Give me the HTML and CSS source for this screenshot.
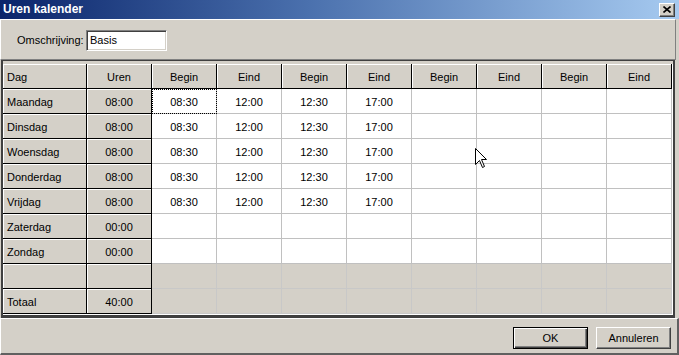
FILE: index.html
```html
<!DOCTYPE html>
<html>
<head>
<meta charset="utf-8">
<link rel="stylesheet" href="styles.css">
</head>
<body>
<div class="window">
  <div class="titlebar">
    <span class="title">Uren kalender</span>
    <div class="close">
      <svg width="8" height="7" viewBox="0 0 8 7"><path d="M0.5 0.5 L7.5 6.5 M7.5 0.5 L0.5 6.5" stroke="#000" stroke-width="1.6" fill="none"/></svg>
    </div>
  </div>
  <div class="toppanel">
    <span class="label">Omschrijving:</span>
    <div class="input">Basis</div>
  </div>
  <div class="gridwrap">
    <div class="gridinner">
      <div class="grid">
        <div class="c fx left">Dag</div><div class="c fx">Uren</div>
        <div class="c fx">Begin</div><div class="c fx">Eind</div><div class="c fx">Begin</div><div class="c fx">Eind</div>
        <div class="c fx">Begin</div><div class="c fx">Eind</div><div class="c fx">Begin</div><div class="c fx">Eind</div>

        <div class="c fx left">Maandag</div><div class="c fx">08:00</div>
        <div class="c d focus">08:30</div><div class="c d">12:00</div><div class="c d">12:30</div><div class="c d">17:00</div>
        <div class="c d"></div><div class="c d"></div><div class="c d"></div><div class="c d"></div>

        <div class="c fx left">Dinsdag</div><div class="c fx">08:00</div>
        <div class="c d">08:30</div><div class="c d">12:00</div><div class="c d">12:30</div><div class="c d">17:00</div>
        <div class="c d"></div><div class="c d"></div><div class="c d"></div><div class="c d"></div>

        <div class="c fx left">Woensdag</div><div class="c fx">08:00</div>
        <div class="c d">08:30</div><div class="c d">12:00</div><div class="c d">12:30</div><div class="c d">17:00</div>
        <div class="c d"></div><div class="c d"></div><div class="c d"></div><div class="c d"></div>

        <div class="c fx left">Donderdag</div><div class="c fx">08:00</div>
        <div class="c d">08:30</div><div class="c d">12:00</div><div class="c d">12:30</div><div class="c d">17:00</div>
        <div class="c d"></div><div class="c d"></div><div class="c d"></div><div class="c d"></div>

        <div class="c fx left">Vrijdag</div><div class="c fx">08:00</div>
        <div class="c d">08:30</div><div class="c d">12:00</div><div class="c d">12:30</div><div class="c d">17:00</div>
        <div class="c d"></div><div class="c d"></div><div class="c d"></div><div class="c d"></div>

        <div class="c fx left">Zaterdag</div><div class="c fx">00:00</div>
        <div class="c d"></div><div class="c d"></div><div class="c d"></div><div class="c d"></div>
        <div class="c d"></div><div class="c d"></div><div class="c d"></div><div class="c d"></div>

        <div class="c fx left">Zondag</div><div class="c fx">00:00</div>
        <div class="c d"></div><div class="c d"></div><div class="c d"></div><div class="c d"></div>
        <div class="c d"></div><div class="c d"></div><div class="c d"></div><div class="c d"></div>

        <div class="c fx left"></div><div class="c fx"></div>
        <div class="c g"></div><div class="c g"></div><div class="c g"></div><div class="c g"></div>
        <div class="c g"></div><div class="c g"></div><div class="c g"></div><div class="c g"></div>

        <div class="c fx left">Totaal</div><div class="c fx">40:00</div>
        <div class="c g last"></div><div class="c g last"></div><div class="c g last"></div><div class="c g last"></div>
        <div class="c g last"></div><div class="c g last"></div><div class="c g last"></div><div class="c g last"></div>
      </div>
    </div>
  </div>
  <div class="bottompanel">
    <div class="btn default"><span>OK</span></div>
    <div class="btn"><span>Annuleren</span></div>
  </div>
  <svg class="cursor" width="13" height="21" viewBox="0 0 13 21">
    <path d="M0.5 0.5 L0.5 16.5 L4.5 12.5 L7.5 19.5 L9.5 18.5 L6.5 11.5 L11.5 11.5 Z" fill="#fff" stroke="#000" stroke-width="1"/>
  </svg>
</div>
</body>
</html>
```

FILE: styles.css
```css
* { box-sizing: border-box; }
html, body { margin: 0; padding: 0; }
body {
  width: 679px;
  height: 355px;
  overflow: hidden;
  background: #d4d0c8;
  font-family: "Liberation Sans", Arial, sans-serif;
  font-size: 11px;
  color: #000;
}
.window {
  position: relative;
  width: 679px;
  height: 355px;
  background: #d4d0c8;
}
.titlebar {
  height: 19px;
  background: linear-gradient(to right, #0a246a 0%, #4a70ad 45%, #a6caf0 100%);
  display: flex;
  align-items: center;
  padding-left: 3px;
  padding-right: 4px;
}
.title {
  flex: 1;
  color: #fff;
  font-weight: bold;
  font-size: 12px;
  line-height: 19px;
}
.close {
  width: 16px;
  height: 14px;
  background: #d4d0c8;
  border-top: 1px solid #fff;
  border-left: 1px solid #fff;
  border-right: 1px solid #404040;
  border-bottom: 1px solid #404040;
  box-shadow: inset -1px -1px 0 #808080;
  display: flex;
  align-items: center;
  justify-content: center;
  padding-bottom: 1px;
}
.close svg { display: block; }
.toppanel {
  width: 676px;
  height: 41px;
  border-top: 1px solid #fff;
  border-left: 1px solid #fff;
  border-right: 1px solid #808080;
  border-bottom: 1px solid #808080;
  display: flex;
  align-items: flex-start;
  padding-top: 10px;
  padding-left: 16px;
}
.label {
  width: 69px;
  line-height: 21px;
}
.input {
  width: 81px;
  height: 21px;
  background: #fff;
  border-top: 1px solid #808080;
  border-left: 1px solid #808080;
  border-right: 1px solid #fff;
  border-bottom: 1px solid #fff;
  box-shadow: inset 1px 1px 0 #404040, inset -1px -1px 0 #d4d0c8;
  padding-left: 3px;
  line-height: 19px;
}
.gridwrap {
  margin-left: 1px;
  width: 674px;
  height: 258px;
  border-top: 1px solid #404040;
  border-left: 2px solid #404040;
  border-right: 2px solid #404040;
  border-bottom: 3px solid #404040;
  padding-top: 3px;
}
.gridinner {
  width: 670px;
  height: 251px;
  border-right: 1px solid #fff;
  border-bottom: 1px solid #fff;
}
.grid {
  display: grid;
  grid-template-columns: 84px repeat(9, 65px);
  grid-auto-rows: 25px;
  width: 669px;
}
.c {
  display: flex;
  align-items: center;
  justify-content: center;
  border-right: 1px solid #c0c0c0;
  border-bottom: 1px solid #c0c0c0;
  white-space: nowrap;
  padding-top: 1px;
}
.c.left { justify-content: flex-start; padding-left: 4px; }
.fx {
  background: #d4d0c8;
  border-right-color: #000;
  border-bottom-color: #000;
  box-shadow: inset 1px 1px 0 #fff;
}
.d { background: #fff; }
.g { background: #d4d0c8; border-right-color: #c8c8c8; border-bottom-color: #c8c8c8; }
.focus {
  outline: 1px dotted #000;
  outline-offset: -1px;
}
.bottompanel {
  width: 679px;
  height: 37px;
  border-top: 1px solid #fff;
  border-left: 1px solid #fff;
  border-right: 2px solid #606060;
  border-bottom: 2px solid #606060;
  display: flex;
  justify-content: flex-end;
  align-items: flex-start;
  gap: 8px;
  padding-top: 8px;
  padding-right: 6px;
}
.btn {
  width: 75px;
  height: 22px;
  background: #d4d0c8;
  border-top: 1px solid #fff;
  border-left: 1px solid #fff;
  border-right: 1px solid #404040;
  border-bottom: 1px solid #404040;
  box-shadow: inset -1px -1px 0 #808080;
  display: flex;
  align-items: center;
  justify-content: center;
  padding-bottom: 1px;
}
.btn.default {
  border: 1px solid #000;
  box-shadow: inset 1px 1px 0 #fff, inset -1px -1px 0 #404040, inset -2px -2px 0 #808080;
}
.cursor {
  position: absolute;
  left: 475px;
  top: 148px;
}
```
